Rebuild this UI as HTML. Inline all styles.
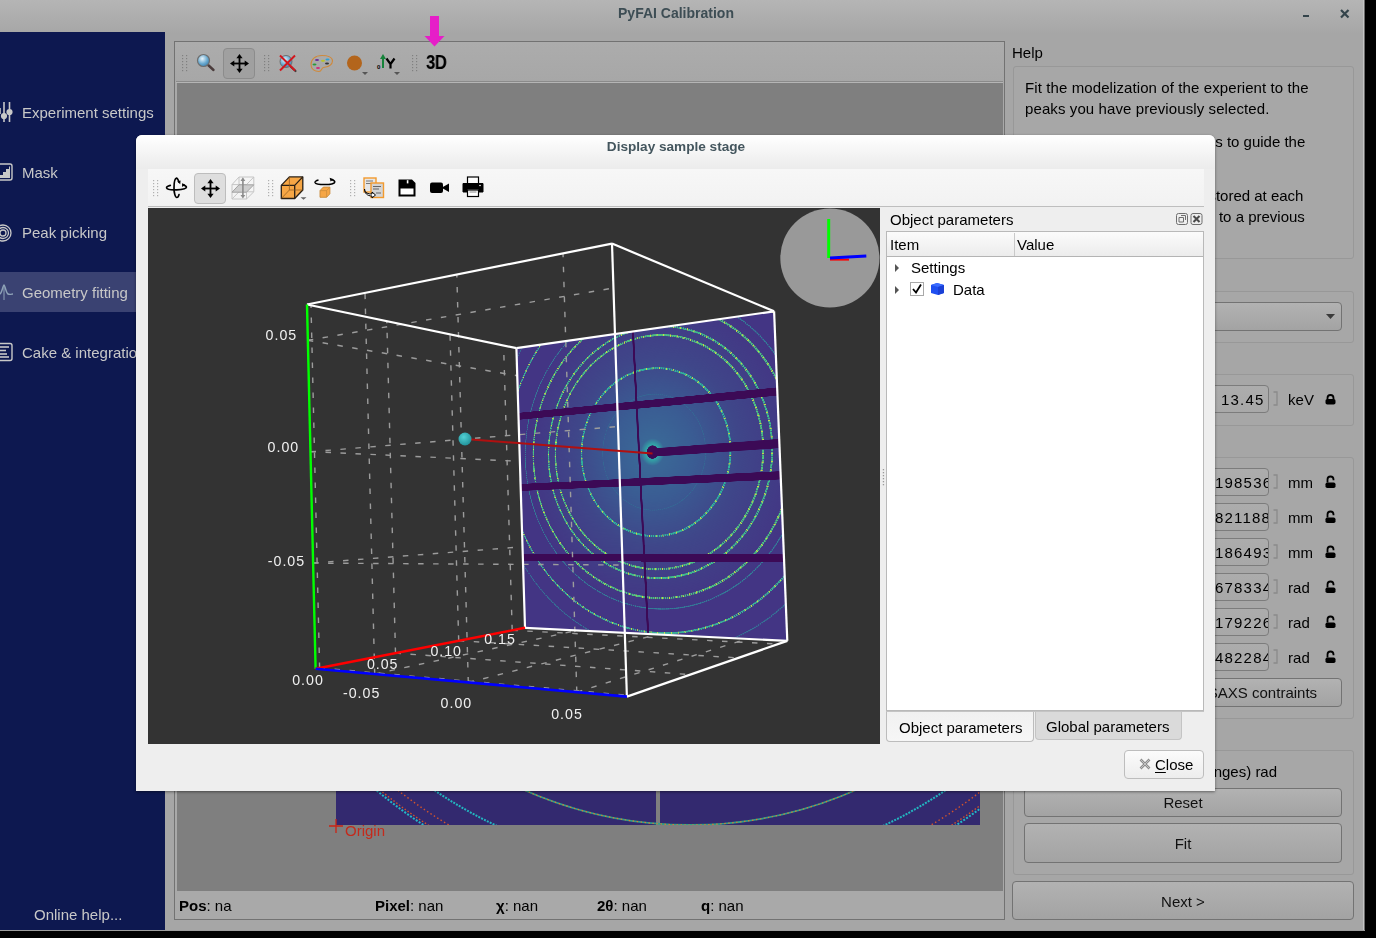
<!DOCTYPE html>
<html><head><meta charset="utf-8">
<style>
*{box-sizing:border-box;margin:0;padding:0}
html,body{width:1376px;height:938px;overflow:hidden;background:#000}
body{position:relative;font-family:"Liberation Sans",sans-serif;font-size:15px;color:#000}
.a{position:absolute}
.t{position:absolute;white-space:nowrap;will-change:transform}
svg{position:absolute;overflow:visible}
</style></head><body>

<div class="a" style="left:0px;top:0px;width:1365px;height:930px;background:#a6a6a6"></div>
<div class="a" style="left:0px;top:0px;width:1365px;height:34px;background:linear-gradient(#b5b5b5,#a6a6a6)"></div>
<div class="a" style="left:1363px;top:0px;width:1px;height:930px;background:#c4c4c4"></div>
<div class="a" style="left:1364px;top:0px;width:1px;height:930px;background:#6a6a6a"></div>
<div class="a" style="left:0px;top:930px;width:1365px;height:1px;background:#9c9c9c"></div>
<div class="t" style="left:526.0px;width:300px;text-align:center;top:6.15px;font-size:14px;line-height:14px;color:#3d4d54;font-weight:bold;">PyFAI Calibration</div>
<div class="a" style="left:1303px;top:15px;width:6px;height:2.2px;background:#34444b"></div>
<svg style="left:1339.5px;top:8.5px" width="10" height="10"><path d="M1 1L8.5 8.5M8.5 1L1 8.5" stroke="#34444b" stroke-width="2.2"/></svg>
<div class="a" style="left:0px;top:32px;width:165px;height:898px;background:#0d1850"></div>
<div class="a" style="left:0px;top:272px;width:165px;height:40px;background:#3a4272"></div>
<div class="t" style="left:22.0px;top:105.30px;font-size:15px;line-height:15px;color:#c8c8c8;font-weight:normal;">Experiment settings</div>
<div class="t" style="left:22.0px;top:165.30px;font-size:15px;line-height:15px;color:#c8c8c8;font-weight:normal;">Mask</div>
<div class="t" style="left:22.0px;top:225.30px;font-size:15px;line-height:15px;color:#c8c8c8;font-weight:normal;">Peak picking</div>
<div class="t" style="left:22.0px;top:285.30px;font-size:15px;line-height:15px;color:#c8c8c8;font-weight:normal;">Geometry fitting</div>
<div class="t" style="left:22.0px;top:345.30px;font-size:15px;line-height:15px;color:#c8c8c8;font-weight:normal;">Cake &amp; integration</div>
<div class="t" style="left:34.0px;top:907.30px;font-size:15px;line-height:15px;color:#c8c8c8;font-weight:normal;">Online help...</div>
<svg style="left:0;top:100px" width="16" height="24"><g stroke="#c8c8c8" stroke-width="1.6" fill="#c8c8c8">
<line x1="4" y1="2" x2="4" y2="22"/><line x1="9.5" y1="2" x2="9.5" y2="22"/><circle cx="4" cy="16" r="2.3"/><circle cx="9.5" cy="12" r="2.3"/><line x1="0" y1="8" x2="0" y2="14"/></g></svg>
<svg style="left:-3px;top:162px" width="18" height="20"><rect x="1" y="2" width="14" height="16" rx="2" fill="none" stroke="#c8c8c8" stroke-width="1.4"/>
<path d="M3 16V13H6V10H9V7H12V4.5H13V16Z" fill="#c8c8c8"/></svg>
<svg style="left:-6px;top:224px" width="20" height="20"><g fill="none" stroke="#c8c8c8" stroke-width="1.3"><circle cx="9" cy="9" r="8"/><circle cx="9" cy="9" r="5.5"/><circle cx="9" cy="9" r="3"/></g></svg>
<svg style="left:0;top:284px" width="16" height="18"><path d="M0 10C2 9 3 1 4 1S6 9 8 10 12 10 13 10" fill="none" stroke="#8fa3b8" stroke-width="1.4"/><line x1="4" y1="2" x2="4" y2="16" stroke="#8fa3b8" stroke-width="1"/></svg>
<svg style="left:-3px;top:342px" width="18" height="20"><rect x="1" y="1.5" width="14" height="17" rx="2" fill="none" stroke="#c8c8c8" stroke-width="1.4"/>
<g stroke="#c8c8c8" stroke-width="1.6"><line x1="2" y1="5" x2="12" y2="5"/><line x1="2" y1="8.5" x2="9" y2="8.5"/><line x1="2" y1="12" x2="10" y2="12"/><line x1="2" y1="15" x2="12" y2="15"/></g></svg>
<div class="a" style="left:174px;top:41px;width:831px;height:879px;border:1px solid #727272;background:#a9a9a9"></div>
<div class="a" style="left:175px;top:42px;width:829px;height:39px;background:linear-gradient(#acacac,#a7a7a7)"></div>
<div class="a" style="left:176px;top:81px;width:827px;height:1px;background:#8a8a8a"></div>
<div class="a" style="left:176px;top:82px;width:827px;height:1px;background:#b5b5b5"></div>
<div class="a" style="left:177px;top:83px;width:826px;height:808px;background:#7f7f7f"></div>
<svg style="left:182px;top:55px" width="6" height="18"><rect x="0" y="0" width="1.2" height="1.2" fill="#808080"/><rect x="4" y="0" width="1.2" height="1.2" fill="#808080"/><rect x="0" y="3" width="1.2" height="1.2" fill="#808080"/><rect x="4" y="3" width="1.2" height="1.2" fill="#808080"/><rect x="0" y="6" width="1.2" height="1.2" fill="#808080"/><rect x="4" y="6" width="1.2" height="1.2" fill="#808080"/><rect x="0" y="9" width="1.2" height="1.2" fill="#808080"/><rect x="4" y="9" width="1.2" height="1.2" fill="#808080"/><rect x="0" y="12" width="1.2" height="1.2" fill="#808080"/><rect x="4" y="12" width="1.2" height="1.2" fill="#808080"/><rect x="0" y="15" width="1.2" height="1.2" fill="#808080"/><rect x="4" y="15" width="1.2" height="1.2" fill="#808080"/></svg>
<svg style="left:196px;top:53px" width="20" height="19"><defs><radialGradient id="lens" cx="0.4" cy="0.35" r="0.7"><stop offset="0" stop-color="#e8f4fb"/><stop offset="0.6" stop-color="#69a9cf"/><stop offset="1" stop-color="#3b7fad"/></radialGradient></defs>
<line x1="11" y1="11" x2="17.5" y2="17" stroke="#4a3b3b" stroke-width="2.4" stroke-linecap="round"/><circle cx="7.5" cy="7.5" r="6" fill="url(#lens)" stroke="#6e6e6e" stroke-width="1.2"/></svg>
<div class="a" style="left:223px;top:48px;width:32px;height:31px;background:#a0a0a0;border:1px solid #8c8c8c;border-radius:4px"></div>
<svg style="left:229.5px;top:53.5px" width="19" height="19"><g fill="#000"><path d="M8.6 3h1.8v13H8.6z"/><path d="M3 8.6h13v1.8H3z"/>
<path d="M9.5 0L12.6 4.3H6.4Z"/><path d="M9.5 19L12.6 14.7H6.4Z"/><path d="M0 9.5L4.3 6.4V12.6Z"/><path d="M19 9.5L14.7 6.4V12.6Z"/></g></svg>
<svg style="left:264px;top:55px" width="6" height="18"><rect x="0" y="0" width="1.2" height="1.2" fill="#808080"/><rect x="4" y="0" width="1.2" height="1.2" fill="#808080"/><rect x="0" y="3" width="1.2" height="1.2" fill="#808080"/><rect x="4" y="3" width="1.2" height="1.2" fill="#808080"/><rect x="0" y="6" width="1.2" height="1.2" fill="#808080"/><rect x="4" y="6" width="1.2" height="1.2" fill="#808080"/><rect x="0" y="9" width="1.2" height="1.2" fill="#808080"/><rect x="4" y="9" width="1.2" height="1.2" fill="#808080"/><rect x="0" y="12" width="1.2" height="1.2" fill="#808080"/><rect x="4" y="12" width="1.2" height="1.2" fill="#808080"/><rect x="0" y="15" width="1.2" height="1.2" fill="#808080"/><rect x="4" y="15" width="1.2" height="1.2" fill="#808080"/></svg>
<svg style="left:278px;top:54px" width="20" height="19"><line x1="11" y1="11" x2="17.5" y2="17" stroke="#4a3b3b" stroke-width="2.2" stroke-linecap="round"/><circle cx="8" cy="7.5" r="6" fill="url(#lens)" stroke="#6e6e6e" stroke-width="1"/>
<path d="M2 1.5L17 16.5M17 1.5L2 16.5" stroke="#d3161d" stroke-width="2"/></svg>
<svg style="left:310px;top:54px" width="24" height="19"><path d="M12 1.5C5 1.5 1 5.5 1 10.5S5 17.5 9 17.5C12 17.5 11 14 13.5 13.5S22 13 22.5 7C22.5 3 17 1.5 12 1.5Z" fill="none" stroke="#d0893a" stroke-width="1.1"/>
<ellipse cx="7" cy="6" rx="2" ry="1.1" fill="#6a2a9a"/><ellipse cx="13" cy="6.8" rx="2" ry="1.1" fill="#b9c22a"/><ellipse cx="17.5" cy="5.5" rx="2" ry="1.1" fill="#2aa2d8"/><ellipse cx="4.5" cy="10.5" rx="2" ry="1.1" fill="#2a9a3a"/><ellipse cx="17" cy="9.5" rx="2" ry="1.1" fill="#333"/><ellipse cx="8" cy="14" rx="2" ry="1.1" fill="#d22a7a"/></svg>
<svg style="left:346px;top:55px" width="24" height="22"><circle cx="8.5" cy="8" r="7.5" fill="#b3651c"/><path d="M16 17h6l-3 3z" fill="#555"/></svg>
<svg style="left:376px;top:53px" width="28" height="24"><path d="M7 15V5" stroke="#16833a" stroke-width="2"/><path d="M7 1L10 6H4Z" fill="#16833a"/>
<text x="1" y="16" font-size="6" font-family="Liberation Sans" font-weight="bold">0</text>
<path d="M10.5 5.5L14.5 11V15.5M18.5 5.5L14.5 11" stroke="#000" stroke-width="2.2" fill="none"/><path d="M18 19h6l-3 3z" fill="#555"/></svg>
<svg style="left:412px;top:55px" width="6" height="18"><rect x="0" y="0" width="1.2" height="1.2" fill="#808080"/><rect x="4" y="0" width="1.2" height="1.2" fill="#808080"/><rect x="0" y="3" width="1.2" height="1.2" fill="#808080"/><rect x="4" y="3" width="1.2" height="1.2" fill="#808080"/><rect x="0" y="6" width="1.2" height="1.2" fill="#808080"/><rect x="4" y="6" width="1.2" height="1.2" fill="#808080"/><rect x="0" y="9" width="1.2" height="1.2" fill="#808080"/><rect x="4" y="9" width="1.2" height="1.2" fill="#808080"/><rect x="0" y="12" width="1.2" height="1.2" fill="#808080"/><rect x="4" y="12" width="1.2" height="1.2" fill="#808080"/><rect x="0" y="15" width="1.2" height="1.2" fill="#808080"/><rect x="4" y="15" width="1.2" height="1.2" fill="#808080"/></svg>
<div class="t" style="left:425.5px;top:53.49px;font-size:19.5px;line-height:19.5px;color:#000;font-weight:bold;letter-spacing:-0.6px;transform:scaleX(0.86);transform-origin:0 0">3D</div>
<svg style="left:424px;top:15px" width="22" height="33"><path d="M6 1H15V21H20.5L10.5 31.5L0.5 21H6Z" fill="#e61ec8"/></svg>
<div class="t" style="left:179px;top:898.3px;font-size:15px;line-height:15px"><b>Pos</b>: na</div>
<div class="t" style="left:375px;top:898.3px;font-size:15px;line-height:15px"><b>Pixel</b>: nan</div>
<div class="t" style="left:496px;top:898.3px;font-size:15px;line-height:15px"><b>&#967;</b>: nan</div>
<div class="t" style="left:597px;top:898.3px;font-size:15px;line-height:15px"><b>2&#952;</b>: nan</div>
<div class="t" style="left:701px;top:898.3px;font-size:15px;line-height:15px"><b>q</b>: nan</div>
<svg style="left:336px;top:785px" width="644" height="40" viewBox="336 785 644 40">
<defs><clipPath id="strip"><rect x="336" y="785" width="644" height="40"/></clipPath></defs>
<rect x="336" y="785" width="644" height="40" fill="#33296f"/>
<rect x="656" y="785" width="4" height="40" fill="#7f7f7f"/>
<g clip-path="url(#strip)" fill="none">
<circle cx="690" cy="415" r="489" stroke="#22b8c8" stroke-width="2" stroke-dasharray="2 1.5"/>
<circle cx="690" cy="415" r="486.5" stroke="#d2542c" stroke-width="1.4" stroke-dasharray="1.5 2"/>
<circle cx="690" cy="415" r="475.6" stroke="#d2542c" stroke-width="1.4" stroke-dasharray="1.5 2.5"/>
<circle cx="690" cy="415" r="454" stroke="#22b6c0" stroke-width="2" stroke-dasharray="2 1.2"/>
<circle cx="690" cy="415" r="410" stroke="#2fa08a" stroke-width="1.8"/>
<circle cx="690" cy="415" r="410" stroke="#d87a30" stroke-width="1.2" stroke-dasharray="1.5 2.5"/>
</g></svg>
<svg style="left:328px;top:818px" width="16" height="16"><path d="M8 1V15M1 8H15" stroke="#cc2415" stroke-width="1.3"/></svg>
<div class="t" style="left:344.5px;top:823.30px;font-size:15px;line-height:15px;color:#c42a1c;font-weight:normal;">Origin</div>
<div class="t" style="left:1012.0px;top:45.30px;font-size:15px;line-height:15px;color:#000;font-weight:normal;">Help</div>
<div class="a" style="left:1013px;top:66px;width:341px;height:193px;border:1px solid #989898;border-radius:3px;background:#a7a7a7"></div>
<div class="t" style="left:1024.5px;top:80.30px;font-size:15px;line-height:15px;color:#000;font-weight:normal;letter-spacing:0.1px">Fit the modelization of the experient to the</div>
<div class="t" style="left:1024.5px;top:101.30px;font-size:15px;line-height:15px;color:#000;font-weight:normal;letter-spacing:0.1px">peaks you have previously selected.</div>
<div class="t" style="left:1024.0px;top:134.30px;font-size:15px;line-height:15px;color:#000;font-weight:normal;">You can use the ring numbers to guide the</div>
<div class="t" style="left:1065.0px;top:188.30px;font-size:15px;line-height:15px;color:#000;font-weight:normal;">The result of the fit is stored at each</div>
<div class="t" style="left:1068.0px;top:209.30px;font-size:15px;line-height:15px;color:#000;font-weight:normal;">step. You can go back to a previous</div>
<div class="a" style="left:1013px;top:291px;width:341px;height:52px;border:1px solid #989898;border-radius:3px;background:#a7a7a7"></div>
<div class="a" style="left:1024px;top:302px;width:318px;height:29px;border:1px solid #737373;border-radius:4px;background:linear-gradient(#b2b2b2,#a3a3a3)"></div>
<svg style="left:1325px;top:313px" width="12" height="8"><path d="M1 1h9l-4.5 5z" fill="#3a3a3a"/></svg>
<div class="a" style="left:1013px;top:374px;width:341px;height:52px;border:1px solid #989898;border-radius:3px;background:#a7a7a7"></div>
<div class="a" style="left:1030px;top:385px;width:239px;height:28px;border:1px solid #7c7c7c;border-radius:4px;background:linear-gradient(#acacac,#a8a8a8)"></div>
<div class="a" style="left:1031px;top:385px;width:232px;height:28px;overflow:hidden"><div class="t" style="right:0;top:6.9px;font-size:15px;line-height:15px;letter-spacing:1.2px;margin-right:-1.2px">13.45</div></div>
<svg style="left:1272px;top:391px" width="7" height="16"><path d="M1.5 1H5V14H1.5" fill="none" stroke="#8a8a8a" stroke-width="1.3"/></svg>
<div class="t" style="left:1288.0px;top:391.70px;font-size:15px;line-height:15px;color:#000;font-weight:normal;letter-spacing:0.1px">keV</div>
<svg style="left:1325px;top:394px" width="11" height="12"><path d="M2.5 5.5V4A3 3 0 0 1 8.5 4V5.5" fill="none" stroke="#000" stroke-width="1.8"/><rect x="0.5" y="5" width="10" height="5.5" rx="1.8" fill="#000"/></svg>
<div class="a" style="left:1013px;top:457px;width:341px;height:262px;border:1px solid #989898;border-radius:3px;background:#a7a7a7"></div>
<div class="a" style="left:1030px;top:468px;width:239px;height:28px;border:1px solid #7c7c7c;border-radius:4px;background:linear-gradient(#acacac,#a8a8a8)"></div>
<div class="a" style="left:1031px;top:468px;width:237px;height:28px;overflow:hidden"><div class="t" style="left:149.7px;top:6.6px;font-size:15px;line-height:15px;letter-spacing:1.2px">0.051985367</div></div>
<svg style="left:1272px;top:474px" width="7" height="16"><path d="M1.5 1H5V14H1.5" fill="none" stroke="#8a8a8a" stroke-width="1.3"/></svg>
<div class="t" style="left:1288.0px;top:474.70px;font-size:15px;line-height:15px;color:#000;font-weight:normal;letter-spacing:0.1px">mm</div>
<svg style="left:1325px;top:476px" width="11" height="13"><path d="M2.5 6.5V3.5A3 3 0 0 1 8.5 3.5V4.2" fill="none" stroke="#000" stroke-width="1.8"/><rect x="0.5" y="6.5" width="10" height="5.5" rx="1.8" fill="#000"/></svg>
<div class="a" style="left:1030px;top:503px;width:239px;height:28px;border:1px solid #7c7c7c;border-radius:4px;background:linear-gradient(#acacac,#a8a8a8)"></div>
<div class="a" style="left:1031px;top:503px;width:237px;height:28px;overflow:hidden"><div class="t" style="left:149.7px;top:6.6px;font-size:15px;line-height:15px;letter-spacing:1.2px">0.058211885</div></div>
<svg style="left:1272px;top:509px" width="7" height="16"><path d="M1.5 1H5V14H1.5" fill="none" stroke="#8a8a8a" stroke-width="1.3"/></svg>
<div class="t" style="left:1288.0px;top:509.70px;font-size:15px;line-height:15px;color:#000;font-weight:normal;letter-spacing:0.1px">mm</div>
<svg style="left:1325px;top:511px" width="11" height="13"><path d="M2.5 6.5V3.5A3 3 0 0 1 8.5 3.5V4.2" fill="none" stroke="#000" stroke-width="1.8"/><rect x="0.5" y="6.5" width="10" height="5.5" rx="1.8" fill="#000"/></svg>
<div class="a" style="left:1030px;top:538px;width:239px;height:28px;border:1px solid #7c7c7c;border-radius:4px;background:linear-gradient(#acacac,#a8a8a8)"></div>
<div class="a" style="left:1031px;top:538px;width:237px;height:28px;overflow:hidden"><div class="t" style="left:149.7px;top:6.6px;font-size:15px;line-height:15px;letter-spacing:1.2px">0.051864932</div></div>
<svg style="left:1272px;top:544px" width="7" height="16"><path d="M1.5 1H5V14H1.5" fill="none" stroke="#8a8a8a" stroke-width="1.3"/></svg>
<div class="t" style="left:1288.0px;top:544.70px;font-size:15px;line-height:15px;color:#000;font-weight:normal;letter-spacing:0.1px">mm</div>
<svg style="left:1325px;top:546px" width="11" height="13"><path d="M2.5 6.5V3.5A3 3 0 0 1 8.5 3.5V4.2" fill="none" stroke="#000" stroke-width="1.8"/><rect x="0.5" y="6.5" width="10" height="5.5" rx="1.8" fill="#000"/></svg>
<div class="a" style="left:1030px;top:573px;width:239px;height:28px;border:1px solid #7c7c7c;border-radius:4px;background:linear-gradient(#acacac,#a8a8a8)"></div>
<div class="a" style="left:1031px;top:573px;width:237px;height:28px;overflow:hidden"><div class="t" style="left:149.7px;top:6.6px;font-size:15px;line-height:15px;letter-spacing:1.2px">0.006783341</div></div>
<svg style="left:1272px;top:579px" width="7" height="16"><path d="M1.5 1H5V14H1.5" fill="none" stroke="#8a8a8a" stroke-width="1.3"/></svg>
<div class="t" style="left:1288.0px;top:579.70px;font-size:15px;line-height:15px;color:#000;font-weight:normal;letter-spacing:0.1px">rad</div>
<svg style="left:1325px;top:581px" width="11" height="13"><path d="M2.5 6.5V3.5A3 3 0 0 1 8.5 3.5V4.2" fill="none" stroke="#000" stroke-width="1.8"/><rect x="0.5" y="6.5" width="10" height="5.5" rx="1.8" fill="#000"/></svg>
<div class="a" style="left:1030px;top:608px;width:239px;height:28px;border:1px solid #7c7c7c;border-radius:4px;background:linear-gradient(#acacac,#a8a8a8)"></div>
<div class="a" style="left:1031px;top:608px;width:237px;height:28px;overflow:hidden"><div class="t" style="left:149.7px;top:6.6px;font-size:15px;line-height:15px;letter-spacing:1.2px">0.001792263</div></div>
<svg style="left:1272px;top:614px" width="7" height="16"><path d="M1.5 1H5V14H1.5" fill="none" stroke="#8a8a8a" stroke-width="1.3"/></svg>
<div class="t" style="left:1288.0px;top:614.70px;font-size:15px;line-height:15px;color:#000;font-weight:normal;letter-spacing:0.1px">rad</div>
<svg style="left:1325px;top:616px" width="11" height="13"><path d="M2.5 6.5V3.5A3 3 0 0 1 8.5 3.5V4.2" fill="none" stroke="#000" stroke-width="1.8"/><rect x="0.5" y="6.5" width="10" height="5.5" rx="1.8" fill="#000"/></svg>
<div class="a" style="left:1030px;top:643px;width:239px;height:28px;border:1px solid #7c7c7c;border-radius:4px;background:linear-gradient(#acacac,#a8a8a8)"></div>
<div class="a" style="left:1031px;top:643px;width:237px;height:28px;overflow:hidden"><div class="t" style="left:149.7px;top:6.6px;font-size:15px;line-height:15px;letter-spacing:1.2px">0.004822844</div></div>
<svg style="left:1272px;top:649px" width="7" height="16"><path d="M1.5 1H5V14H1.5" fill="none" stroke="#8a8a8a" stroke-width="1.3"/></svg>
<div class="t" style="left:1288.0px;top:649.70px;font-size:15px;line-height:15px;color:#000;font-weight:normal;letter-spacing:0.1px">rad</div>
<svg style="left:1325px;top:651px" width="11" height="13"><path d="M2.5 6.5V3.5A3 3 0 0 1 8.5 3.5V4.2" fill="none" stroke="#000" stroke-width="1.8"/><rect x="0.5" y="6.5" width="10" height="5.5" rx="1.8" fill="#000"/></svg>
<div class="a" style="left:1024px;top:678px;width:318px;height:29px;border:1px solid #737373;border-radius:4px;background:linear-gradient(#b2b2b2,#a3a3a3)"></div>
<div class="t" style="left:1176.8px;top:685.30px;font-size:15px;line-height:15px;color:#111;font-weight:normal;">Use SAXS contraints</div>
<div class="a" style="left:1013px;top:750px;width:341px;height:125px;border:1px solid #989898;border-radius:3px;background:#a7a7a7"></div>
<div class="t" style="left:1127.0px;top:764.30px;font-size:15px;line-height:15px;color:#000;font-weight:normal;">Max (fixed ranges) rad</div>
<div class="a" style="left:1024px;top:788px;width:318px;height:29px;border:1px solid #737373;border-radius:4px;background:linear-gradient(#b2b2b2,#a3a3a3)"></div>
<div class="t" style="left:1024.0px;width:318px;text-align:center;top:795.30px;font-size:15px;line-height:15px;color:#111;font-weight:normal;">Reset</div>
<div class="a" style="left:1024px;top:823px;width:318px;height:40px;border:1px solid #737373;border-radius:4px;background:linear-gradient(#b2b2b2,#a3a3a3)"></div>
<div class="t" style="left:1024.0px;width:318px;text-align:center;top:836.30px;font-size:15px;line-height:15px;color:#111;font-weight:normal;">Fit</div>
<div class="a" style="left:1012px;top:881px;width:342px;height:39px;border:1px solid #737373;border-radius:4px;background:linear-gradient(#b2b2b2,#a3a3a3)"></div>
<div class="t" style="left:1012.0px;width:342px;text-align:center;top:894.30px;font-size:15px;line-height:15px;color:#111;font-weight:normal;">Next &gt;</div>
<div class="a" style="left:136px;top:135px;width:1079px;height:656px;background:#eeeeee;border-radius:6px 6px 0 0;box-shadow:0 1px 3px rgba(0,0,0,.45)"></div>
<div class="a" style="left:136px;top:135px;width:1079px;height:34px;border-radius:6px 6px 0 0;background:linear-gradient(#ffffff,#efefef 80%,#ececec)"></div>
<div class="t" style="left:476.0px;width:400px;text-align:center;top:139.99px;font-size:13.6px;line-height:13.6px;color:#44565e;font-weight:bold;">Display sample stage</div>
<div class="a" style="left:148px;top:169px;width:1056px;height:37px;background:linear-gradient(#f7f7f7,#f2f2f2)"></div>
<div class="a" style="left:148px;top:206px;width:1056px;height:1px;background:#bebebe"></div>
<svg style="left:153px;top:180px" width="6" height="18"><rect x="0" y="0" width="1.2" height="1.2" fill="#b0b0b0"/><rect x="4" y="0" width="1.2" height="1.2" fill="#b0b0b0"/><rect x="0" y="3" width="1.2" height="1.2" fill="#b0b0b0"/><rect x="4" y="3" width="1.2" height="1.2" fill="#b0b0b0"/><rect x="0" y="6" width="1.2" height="1.2" fill="#b0b0b0"/><rect x="4" y="6" width="1.2" height="1.2" fill="#b0b0b0"/><rect x="0" y="9" width="1.2" height="1.2" fill="#b0b0b0"/><rect x="4" y="9" width="1.2" height="1.2" fill="#b0b0b0"/><rect x="0" y="12" width="1.2" height="1.2" fill="#b0b0b0"/><rect x="4" y="12" width="1.2" height="1.2" fill="#b0b0b0"/><rect x="0" y="15" width="1.2" height="1.2" fill="#b0b0b0"/><rect x="4" y="15" width="1.2" height="1.2" fill="#b0b0b0"/></svg>
<svg style="left:166px;top:177px" width="22" height="22"><g fill="none" stroke="#000" stroke-width="1.7" stroke-linecap="round">
<path d="M13 5C12 2.5 11.2 1.2 10.5 1.2C9 1.5 8 6 8 11C8 16 9.3 20.5 10.8 20.5C12 20.5 12.7 18.8 13 17.6"/>
<path d="M4.3 8.4C1.8 9 0.5 10 0.6 10.9C1 12.4 6 13 10.7 12.8C15.5 12.6 20.4 11.8 20.4 10.3C20.4 9.4 19 8.6 17.3 8.2"/></g>
<path d="M11.2 4.6L14.6 3.6L14.2 7.3Z M16 6.3L19.2 7.6L16.2 10Z" fill="#000"/></svg>
<div class="a" style="left:194px;top:173px;width:32px;height:31px;background:#dedede;border:1px solid #bdbdbd;border-radius:4px"></div>
<svg style="left:200.5px;top:178.5px" width="19" height="19"><g fill="#000"><path d="M8.6 3h1.8v13H8.6z"/><path d="M3 8.6h13v1.8H3z"/>
<path d="M9.5 0L12.6 4.3H6.4Z"/><path d="M9.5 19L12.6 14.7H6.4Z"/><path d="M0 9.5L4.3 6.4V12.6Z"/><path d="M19 9.5L14.7 6.4V12.6Z"/></g></svg>
<svg style="left:231px;top:176px" width="24" height="24"><g fill="none" stroke="#c6c6c6" stroke-width="1"><path d="M1 8.6H15.5V23H1Z"/><path d="M8 1H22.8V15.8H8Z"/><path d="M1 8.6L8 1M15.5 8.6L22.8 1M15.5 23L22.8 15.8M1 23L8 15.8"/></g>
<path d="M1 16.2L8 8.8H22.8L15.5 16.2Z" fill="#cdcdcd" stroke="#9c9c9c" stroke-width="0.9"/><path d="M11.9 4V20" stroke="#8c8c8c" stroke-width="1.6"/><path d="M11.9 1.3L14.3 5H9.5ZM11.9 22.6L14.3 19H9.5Z" fill="#8c8c8c"/></svg>
<svg style="left:268px;top:180px" width="6" height="18"><rect x="0" y="0" width="1.2" height="1.2" fill="#b0b0b0"/><rect x="4" y="0" width="1.2" height="1.2" fill="#b0b0b0"/><rect x="0" y="3" width="1.2" height="1.2" fill="#b0b0b0"/><rect x="4" y="3" width="1.2" height="1.2" fill="#b0b0b0"/><rect x="0" y="6" width="1.2" height="1.2" fill="#b0b0b0"/><rect x="4" y="6" width="1.2" height="1.2" fill="#b0b0b0"/><rect x="0" y="9" width="1.2" height="1.2" fill="#b0b0b0"/><rect x="4" y="9" width="1.2" height="1.2" fill="#b0b0b0"/><rect x="0" y="12" width="1.2" height="1.2" fill="#b0b0b0"/><rect x="4" y="12" width="1.2" height="1.2" fill="#b0b0b0"/><rect x="0" y="15" width="1.2" height="1.2" fill="#b0b0b0"/><rect x="4" y="15" width="1.2" height="1.2" fill="#b0b0b0"/></svg>
<svg style="left:280px;top:175px" width="28" height="26"><path d="M1.3 10.4L9.4 1.9H22.8V15L14.7 23.5H1.3Z" fill="#f6a645" stroke="#2a2016" stroke-width="1.3" stroke-linejoin="round"/>
<path d="M1.3 10.4H14.7V23.5M14.7 10.4L22.8 1.9" fill="none" stroke="#2a2016" stroke-width="1.3"/><path d="M9.4 1.9V15H22.8M9.4 15L1.3 23.5" fill="none" stroke="#8a5a20" stroke-width="0.7"/>
<path d="M20.5 22.3h6l-3 2.4z" fill="#666"/></svg>
<svg style="left:314px;top:177px" width="22" height="22"><path d="M4.5 3.1C1.8 3.7 0.8 4.8 1 5.5C1.5 7 6 7.6 10.9 7.6C16 7.6 20.8 6.6 20.8 5C20.8 4 19.6 3.2 18 2.7" fill="none" stroke="#000" stroke-width="1.5"/><path d="M15.6 0.8L19.8 2.3L16.6 4.6Z" fill="#000"/>
<path d="M6 13.6L9.3 10.1H15.9V16.8L12.6 20.3H6Z" fill="#f6a645" stroke="#c98a3a" stroke-width="0.9"/><path d="M6 13.6H12.6V20.3M12.6 13.6L15.9 10.1" fill="none" stroke="#c98a3a" stroke-width="0.7"/></svg>
<svg style="left:350px;top:180px" width="6" height="18"><rect x="0" y="0" width="1.2" height="1.2" fill="#b0b0b0"/><rect x="4" y="0" width="1.2" height="1.2" fill="#b0b0b0"/><rect x="0" y="3" width="1.2" height="1.2" fill="#b0b0b0"/><rect x="4" y="3" width="1.2" height="1.2" fill="#b0b0b0"/><rect x="0" y="6" width="1.2" height="1.2" fill="#b0b0b0"/><rect x="4" y="6" width="1.2" height="1.2" fill="#b0b0b0"/><rect x="0" y="9" width="1.2" height="1.2" fill="#b0b0b0"/><rect x="4" y="9" width="1.2" height="1.2" fill="#b0b0b0"/><rect x="0" y="12" width="1.2" height="1.2" fill="#b0b0b0"/><rect x="4" y="12" width="1.2" height="1.2" fill="#b0b0b0"/><rect x="0" y="15" width="1.2" height="1.2" fill="#b0b0b0"/><rect x="4" y="15" width="1.2" height="1.2" fill="#b0b0b0"/></svg>
<svg style="left:363px;top:177px" width="22" height="22"><rect x="1" y="1" width="12" height="14" fill="#e6e6e6" stroke="#f29a2e" stroke-width="1.4"/><g stroke="#777" stroke-width="1"><line x1="3" y1="4" x2="10" y2="4"/><line x1="3" y1="6.5" x2="9" y2="6.5"/></g>
<rect x="8" y="6" width="12.5" height="14.5" fill="#d4d4d4" stroke="#f29a2e" stroke-width="1.4"/><g stroke="#666" stroke-width="1"><line x1="10" y1="9.5" x2="18" y2="9.5"/><line x1="10" y1="12" x2="16" y2="12"/><line x1="13" y1="16" x2="18" y2="16"/></g>
<path d="M1.5 12C2 16 5 17 9 17V15L12.5 18L9 21V19C4 19 1.5 16 1.5 12Z" fill="#fff" stroke="#000" stroke-width="1"/></svg>
<svg style="left:398px;top:179px" width="19" height="19"><path d="M0.5 0.5H14L17.5 4V17.5H0.5Z" fill="#000"/><rect x="2.5" y="9.5" width="13" height="6" fill="#fff"/><rect x="8.8" y="1.2" width="1.6" height="3.2" fill="#fff"/></svg>
<svg style="left:430px;top:182px" width="20" height="12"><rect x="0" y="0.5" width="13" height="10.5" rx="2" fill="#000"/><path d="M12 5.5L19 1.5V10L12 6Z" fill="#000"/></svg>
<svg style="left:462px;top:176px" width="22" height="22"><rect x="5.5" y="1" width="11" height="7" fill="#fff" stroke="#000" stroke-width="1.2"/><path d="M1 7.5H21V16H17V13H5V16H1Z" fill="#000" stroke="#000" stroke-width="1" stroke-linejoin="round"/>
<rect x="5.5" y="14" width="11" height="6.5" fill="#fff" stroke="#000" stroke-width="1.2"/><line x1="7.5" y1="16" x2="14.5" y2="16" stroke="#888"/><circle cx="18" cy="9.5" r="0.8" fill="#fff"/></svg>
<div class="a" style="left:148px;top:208px;width:732px;height:536px;background:#333333"></div>
<div class="a" style="left:148px;top:208px;width:732px;height:536px;overflow:hidden"><div class="a" style="left:-148px;top:-208px;width:1376px;height:938px"><div style="position:absolute;left:0;top:0;width:1000px;height:1000px;transform-origin:0 0;transform:matrix3d(0.14057508,-0.08400113,0,-0.0001513046,0.00339047,0.27337040,0,-0.0000099229,0,0,1,0,516.4000,348.2000,0,1.000000)"><svg width="1000" height="1000" viewBox="0 0 1000 1000" style="position:absolute;left:0;top:0;overflow:hidden">
<defs><radialGradient id="dg" cx="552" cy="405" r="520" gradientUnits="userSpaceOnUse">
<stop offset="0" stop-color="#3a6c98"/><stop offset="0.3" stop-color="#3a5c93"/><stop offset="0.6" stop-color="#3f4689"/><stop offset="1" stop-color="#433584"/></radialGradient>
<radialGradient id="bc" cx="552" cy="405" r="45" gradientUnits="userSpaceOnUse"><stop offset="0.3" stop-color="#2ec4b0"/><stop offset="1" stop-color="#2ec4b0" stop-opacity="0"/></radialGradient></defs>
<rect width="1000" height="1000" fill="#433584"/>
<rect width="1000" height="1000" fill="url(#dg)"/>
<ellipse cx="552" cy="405" rx="196" ry="190" fill="none" stroke="#2b8a9a" stroke-width="3" stroke-dasharray="6 1.5" opacity="0.35"/><ellipse cx="552" cy="405" rx="283" ry="275" fill="none" stroke="#30b49c" stroke-width="6.5" stroke-dasharray="6 1.5" opacity="1.0"/><ellipse cx="552" cy="405" rx="283" ry="275" fill="none" stroke="#dfe33a" stroke-width="7.0" stroke-dasharray="3.5 22" opacity="0.85"/><ellipse cx="552" cy="405" rx="394" ry="383" fill="none" stroke="#4cc282" stroke-width="6.5" stroke-dasharray="6 1.5" opacity="1.0"/><ellipse cx="552" cy="405" rx="394" ry="383" fill="none" stroke="#dfe33a" stroke-width="7.0" stroke-dasharray="3.5 22" opacity="0.85"/><ellipse cx="552" cy="405" rx="424" ry="412" fill="none" stroke="#40bc8c" stroke-width="6.5" stroke-dasharray="6 1.5" opacity="1.0"/><ellipse cx="552" cy="405" rx="424" ry="412" fill="none" stroke="#dfe33a" stroke-width="7.0" stroke-dasharray="3.5 22" opacity="0.85"/><ellipse cx="552" cy="405" rx="491" ry="477" fill="none" stroke="#4cc282" stroke-width="6.5" stroke-dasharray="6 1.5" opacity="1.0"/><ellipse cx="552" cy="405" rx="491" ry="477" fill="none" stroke="#dfe33a" stroke-width="7.0" stroke-dasharray="3.5 22" opacity="0.85"/><ellipse cx="552" cy="405" rx="527" ry="512" fill="none" stroke="#2c9ba0" stroke-width="4" stroke-dasharray="6 1.5" opacity="0.7"/><ellipse cx="552" cy="405" rx="608" ry="590" fill="none" stroke="#3ab898" stroke-width="6" stroke-dasharray="6 1.5" opacity="0.95"/><ellipse cx="552" cy="405" rx="608" ry="590" fill="none" stroke="#dfe33a" stroke-width="6.5" stroke-dasharray="3.5 22" opacity="0.85"/><ellipse cx="552" cy="405" rx="670" ry="650" fill="none" stroke="#2c9ba0" stroke-width="4" stroke-dasharray="6 1.5" opacity="0.6"/>
<circle cx="552" cy="405" r="45" fill="url(#bc)"/>
<rect x="0" y="233" width="1000" height="25" fill="#3c0a56"/>
<rect x="0" y="488" width="1000" height="25" fill="#3c0a56"/>
<rect x="0" y="738" width="1000" height="25" fill="#3c0a56"/>
<path d="M552 393L1000 390V418L552 420Z" fill="#3c0a56"/>
<circle cx="552" cy="405" r="22" fill="#3c0a56"/>
<path d="M489 0H497L515 1000H507Z" fill="#3c0a56"/>
</svg></div></div></div>
<svg style="left:0;top:0" width="1376" height="938" viewBox="0 0 1376 938"><defs><clipPath id="glc"><rect x="148" y="208" width="732" height="536"/></clipPath></defs><g clip-path="url(#glc)"><line x1="319.6" y1="667.9" x2="311.0" y2="305.3" stroke="#9c9c9c" stroke-width="1.4" stroke-dasharray="5.5 9.5"/><line x1="319.6" y1="667.9" x2="630.1" y2="695.5" stroke="#9c9c9c" stroke-width="1.4" stroke-dasharray="5.5 9.5"/><line x1="395.5" y1="653.1" x2="386.8" y2="321.1" stroke="#9c9c9c" stroke-width="1.4" stroke-dasharray="5.5 9.5"/><line x1="395.5" y1="653.1" x2="690.2" y2="674.6" stroke="#9c9c9c" stroke-width="1.4" stroke-dasharray="5.5 9.5"/><line x1="458.7" y1="640.7" x2="450.0" y2="334.3" stroke="#9c9c9c" stroke-width="1.4" stroke-dasharray="5.5 9.5"/><line x1="458.8" y1="640.7" x2="738.4" y2="657.9" stroke="#9c9c9c" stroke-width="1.4" stroke-dasharray="5.5 9.5"/><line x1="512.2" y1="630.3" x2="503.6" y2="345.5" stroke="#9c9c9c" stroke-width="1.4" stroke-dasharray="5.5 9.5"/><line x1="512.3" y1="630.3" x2="778.0" y2="644.1" stroke="#9c9c9c" stroke-width="1.4" stroke-dasharray="5.5 9.5"/><line x1="307.8" y1="340.3" x2="517.2" y2="375.7" stroke="#9c9c9c" stroke-width="1.4" stroke-dasharray="5.5 9.5"/><line x1="307.8" y1="340.3" x2="613.5" y2="288.0" stroke="#9c9c9c" stroke-width="1.4" stroke-dasharray="5.5 9.5"/><line x1="310.5" y1="451.6" x2="519.9" y2="461.3" stroke="#9c9c9c" stroke-width="1.4" stroke-dasharray="5.5 9.5"/><line x1="310.5" y1="451.8" x2="618.0" y2="426.5" stroke="#9c9c9c" stroke-width="1.4" stroke-dasharray="5.5 9.5"/><line x1="313.1" y1="563.0" x2="522.5" y2="546.8" stroke="#9c9c9c" stroke-width="1.4" stroke-dasharray="5.5 9.5"/><line x1="313.1" y1="563.1" x2="622.6" y2="565.0" stroke="#9c9c9c" stroke-width="1.4" stroke-dasharray="5.5 9.5"/><line x1="374.7" y1="674.0" x2="365.0" y2="292.9" stroke="#9c9c9c" stroke-width="1.4" stroke-dasharray="5.5 9.5"/><line x1="374.9" y1="674.0" x2="577.2" y2="630.4" stroke="#9c9c9c" stroke-width="1.4" stroke-dasharray="5.5 9.5"/><line x1="468.3" y1="682.4" x2="456.8" y2="274.6" stroke="#9c9c9c" stroke-width="1.4" stroke-dasharray="5.5 9.5"/><line x1="468.6" y1="682.4" x2="657.5" y2="634.4" stroke="#9c9c9c" stroke-width="1.4" stroke-dasharray="5.5 9.5"/><line x1="576.8" y1="692.1" x2="563.0" y2="253.4" stroke="#9c9c9c" stroke-width="1.4" stroke-dasharray="5.5 9.5"/><line x1="577.0" y1="692.1" x2="747.1" y2="638.9" stroke="#9c9c9c" stroke-width="1.4" stroke-dasharray="5.5 9.5"/><line x1="307.0" y1="304.5" x2="612.0" y2="243.6" stroke="#ffffff" stroke-width="2.2" /><line x1="307.0" y1="304.5" x2="516.4" y2="348.2" stroke="#ffffff" stroke-width="2.2" /><line x1="612.0" y1="243.6" x2="774.1" y2="311.3" stroke="#ffffff" stroke-width="2.2" /><line x1="516.4" y1="348.2" x2="774.1" y2="311.3" stroke="#ffffff" stroke-width="2.2" /><line x1="612.0" y1="243.6" x2="626.9" y2="696.6" stroke="#ffffff" stroke-width="2.2" /><line x1="774.1" y1="311.3" x2="787.3" y2="640.9" stroke="#ffffff" stroke-width="2.2" /><line x1="626.9" y1="696.6" x2="787.3" y2="640.9" stroke="#ffffff" stroke-width="2.2" /><line x1="525.0" y1="627.8" x2="516.4" y2="348.2" stroke="#ffffff" stroke-width="2.2" /><line x1="525.0" y1="627.8" x2="787.3" y2="640.9" stroke="#ffffff" stroke-width="2.2" /><line x1="315.6" y1="668.7" x2="307.0" y2="304.5" stroke="#00ff00" stroke-width="2.4" /><line x1="315.6" y1="668.7" x2="525.0" y2="627.8" stroke="#ff0000" stroke-width="2.4" /><line x1="315.6" y1="668.7" x2="626.9" y2="696.6" stroke="#0000ff" stroke-width="2.6" /><line x1="465.0" y1="439.0" x2="652.5" y2="453.5" stroke="#b01010" stroke-width="2" /><defs><radialGradient id="sph" cx="0.4" cy="0.35" r="0.7"><stop offset="0" stop-color="#52d0d4"/><stop offset="1" stop-color="#1e8f97"/></radialGradient></defs><circle cx="465" cy="439" r="6.5" fill="url(#sph)"/><text x="265.6" y="340.3" fill="#f0f0f0" font-family="Liberation Sans" font-size="14.2" letter-spacing="1">0.05</text><text x="267.6" y="451.6" fill="#f0f0f0" font-family="Liberation Sans" font-size="14.2" letter-spacing="1">0.00</text><text x="267.8" y="566" fill="#f0f0f0" font-family="Liberation Sans" font-size="14.2" letter-spacing="1">-0.05</text><text x="292.2" y="685.4" fill="#f0f0f0" font-family="Liberation Sans" font-size="14.2" letter-spacing="1">0.00</text><text x="343" y="697.9" fill="#f0f0f0" font-family="Liberation Sans" font-size="14.2" letter-spacing="1">-0.05</text><text x="440.6" y="707.8" fill="#f0f0f0" font-family="Liberation Sans" font-size="14.2" letter-spacing="1">0.00</text><text x="551.2" y="719.3" fill="#f0f0f0" font-family="Liberation Sans" font-size="14.2" letter-spacing="1">0.05</text><text x="366.9" y="669" fill="#f0f0f0" font-family="Liberation Sans" font-size="14.2" letter-spacing="1">0.05</text><text x="430.4" y="655.5" fill="#f0f0f0" font-family="Liberation Sans" font-size="14.2" letter-spacing="1">0.10</text><text x="484.2" y="643.6" fill="#f0f0f0" font-family="Liberation Sans" font-size="14.2" letter-spacing="1">0.15</text><circle cx="829.9" cy="258" r="49.6" fill="#999999"/><line x1="828.7" y1="219.0" x2="828.7" y2="258.0" stroke="#00ff00" stroke-width="3" /><line x1="830.0" y1="259.6" x2="849.0" y2="259.6" stroke="#ff0000" stroke-width="2" /><line x1="830.0" y1="258.0" x2="866.3" y2="256.0" stroke="#0000ff" stroke-width="3" /></g></svg>
<svg style="left:882px;top:468px" width="3" height="18"><rect x="0.8" y="1" width="1.3" height="1.3" fill="#9a9a9a"/><rect x="0.8" y="4" width="1.3" height="1.3" fill="#9a9a9a"/><rect x="0.8" y="7" width="1.3" height="1.3" fill="#9a9a9a"/><rect x="0.8" y="10" width="1.3" height="1.3" fill="#9a9a9a"/><rect x="0.8" y="13" width="1.3" height="1.3" fill="#9a9a9a"/><rect x="0.8" y="16" width="1.3" height="1.3" fill="#9a9a9a"/></svg>
<div class="t" style="left:890.0px;top:212.30px;font-size:15px;line-height:15px;color:#000;font-weight:normal;">Object parameters</div>
<svg style="left:1176px;top:213px" width="28" height="14"><rect x="0.5" y="0.5" width="11" height="11" rx="2" fill="none" stroke="#6e6e6e"/><path d="M3 4.5h4.5v4.5H3z M5 2.5h4.5v4.5" fill="none" stroke="#6e6e6e"/>
<rect x="15" y="0.5" width="11" height="11" rx="2" fill="none" stroke="#6e6e6e"/><path d="M17.5 3L23.5 9M23.5 3L17.5 9" stroke="#4a4a4a" stroke-width="2"/></svg>
<div class="a" style="left:886px;top:231px;width:318px;height:480px;background:#fff;border:1px solid #b9b9b9"></div>
<div class="a" style="left:887px;top:232px;width:316px;height:25px;background:linear-gradient(#fbfbfb,#ececec);border-bottom:1px solid #b4b4b4"></div>
<div class="a" style="left:1014px;top:233px;width:1px;height:23px;background:#c9c9c9"></div>
<div class="t" style="left:890.0px;top:237.30px;font-size:15px;line-height:15px;color:#000;font-weight:normal;">Item</div>
<div class="t" style="left:1017.0px;top:237.30px;font-size:15px;line-height:15px;color:#000;font-weight:normal;">Value</div>
<svg style="left:894px;top:263px" width="6" height="10"><path d="M1 1L5 5L1 9Z" fill="#555"/></svg>
<div class="t" style="left:910.5px;top:260.30px;font-size:15px;line-height:15px;color:#000;font-weight:normal;">Settings</div>
<svg style="left:894px;top:285px" width="6" height="10"><path d="M1 1L5 5L1 9Z" fill="#555"/></svg>
<svg style="left:910px;top:282px" width="15" height="15"><rect x="0.5" y="0.5" width="13" height="13" fill="#fff" stroke="#a9a9a9"/><path d="M3 7L6 10.5L11 2.5" fill="none" stroke="#000" stroke-width="1.8"/></svg>
<svg style="left:930px;top:282px" width="16" height="14"><path d="M1 3L7 1L14 3V11L8 13L1 11Z" fill="#1f4ff0"/><path d="M1 3L8 5L14 3L7 1Z" fill="#3b6cff"/><path d="M8 5V13L14 11V3Z" fill="#1a40d6"/></svg>
<div class="t" style="left:952.5px;top:281.80px;font-size:15px;line-height:15px;color:#000;font-weight:normal;">Data</div>
<div class="a" style="left:886px;top:711px;width:318px;height:1px;background:#c4c4c4"></div>
<div class="a" style="left:886px;top:712px;width:148px;height:30px;background:linear-gradient(#f1f1f1,#f6f6f6);border:1px solid #bcbcbc;border-top:none;border-radius:0 0 4px 4px"></div>
<div class="t" style="left:898.5px;top:720.30px;font-size:15px;line-height:15px;color:#000;font-weight:normal;">Object parameters</div>
<div class="a" style="left:1035px;top:712px;width:147px;height:28px;background:#dadada;border:1px solid #c4c4c4;border-top:none;border-radius:0 0 4px 4px"></div>
<div class="t" style="left:1046.0px;top:719.30px;font-size:15px;line-height:15px;color:#000;font-weight:normal;">Global parameters</div>
<div class="a" style="left:1124px;top:750px;width:80px;height:29px;background:linear-gradient(#fbfbfb,#ededed);border:1px solid #bdbdbd;border-radius:4px"></div>
<svg style="left:1139px;top:758px" width="12" height="12"><path d="M1.5 1.5L10.5 10.5M10.5 1.5L1.5 10.5" stroke="#8e8e8e" stroke-width="2.6"/><path d="M1.5 1.5L10.5 10.5M10.5 1.5L1.5 10.5" stroke="#cfcfcf" stroke-width="0.8"/></svg>
<div class="t" style="left:1154.5px;top:757.30px;font-size:15px;line-height:15px;color:#000;font-weight:normal;"><u style="text-decoration-thickness:1px;text-underline-offset:2px">C</u>lose</div>
</body></html>
